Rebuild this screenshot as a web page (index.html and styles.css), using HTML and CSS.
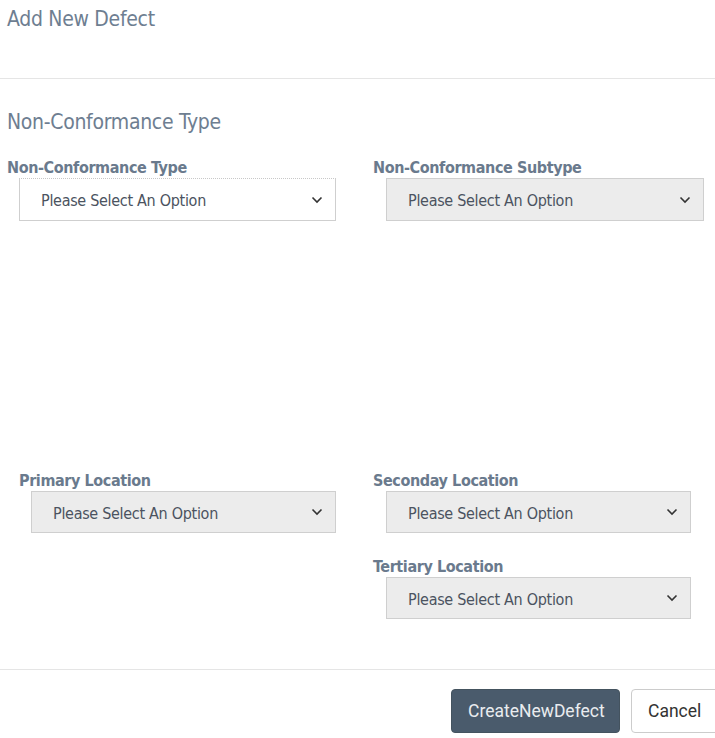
FILE: index.html
```html
<!DOCTYPE html>
<html>
<head>
<meta charset="utf-8">
<link rel="stylesheet" href="styles.css">
</head>
<body>
<div class="modal">
  <div class="modal-header">
    <h1 class="modal-title">Add New Defect</h1>
  </div>
  <div class="modal-body">
    <h2 class="section-title">Non-Conformance Type</h2>
    <div class="row row-top">
      <div class="field field-left">
        <label class="field-label">Non-Conformance Type</label>
        <div class="select select-white select-focus">
          <span class="select-text">Please Select An Option</span>
          <svg class="chev" width="12" height="8" viewBox="0 0 12 8"><path d="M1.5 1.5 L6 6 L10.5 1.5" fill="none" stroke="#333" stroke-width="1.6"/></svg>
        </div>
      </div>
      <div class="field field-right">
        <label class="field-label">Non-Conformance Subtype</label>
        <div class="select select-wide">
          <span class="select-text">Please Select An Option</span>
          <svg class="chev" width="12" height="8" viewBox="0 0 12 8"><path d="M1.5 1.5 L6 6 L10.5 1.5" fill="none" stroke="#333" stroke-width="1.6"/></svg>
        </div>
      </div>
    </div>
    <div class="row row-loc">
      <div class="field field-left indent">
        <label class="field-label">Primary Location</label>
        <div class="select">
          <span class="select-text">Please Select An Option</span>
          <svg class="chev" width="12" height="8" viewBox="0 0 12 8"><path d="M1.5 1.5 L6 6 L10.5 1.5" fill="none" stroke="#333" stroke-width="1.6"/></svg>
        </div>
      </div>
      <div class="field field-right">
        <label class="field-label">Seconday Location</label>
        <div class="select">
          <span class="select-text">Please Select An Option</span>
          <svg class="chev" width="12" height="8" viewBox="0 0 12 8"><path d="M1.5 1.5 L6 6 L10.5 1.5" fill="none" stroke="#333" stroke-width="1.6"/></svg>
        </div>
        <label class="field-label second">Tertiary Location</label>
        <div class="select">
          <span class="select-text">Please Select An Option</span>
          <svg class="chev" width="12" height="8" viewBox="0 0 12 8"><path d="M1.5 1.5 L6 6 L10.5 1.5" fill="none" stroke="#333" stroke-width="1.6"/></svg>
        </div>
      </div>
    </div>
  </div>
  <div class="modal-footer">
    <button class="btn btn-primary">CreateNewDefect</button>
    <button class="btn btn-default">Cancel</button>
  </div>
</div>
</body>
</html>
```
FILE: styles.css
```css
* { box-sizing: border-box; }
html, body { margin: 0; padding: 0; background: #fff; overflow: hidden; }
body { width: 715px; height: 738px; font-family: "DejaVu Sans Condensed", "DejaVu Sans", sans-serif; }

.modal-header {
  height: 79px;
  padding: 6px 7px 0;
  border-bottom: 1px solid #e5e5e5;
}
.modal-title {
  margin: 0;
  font-weight: normal;
  font-size: 21px;
  line-height: 26px;
  color: #6e7e91;
  letter-spacing: -0.3px;
}

.modal-body { padding: 30px 0 0 7px; height: 590px; }
.section-title {
  margin: 0;
  font-weight: normal;
  font-size: 21px;
  line-height: 26px;
  color: #6e7e91;
  letter-spacing: -0.3px;
}

.row { display: flex; }
.row-top { margin-top: 24px; }
.row-loc { margin-top: 251px; }

.field { display: flex; flex-direction: column; }
.field-left { width: 366px; }
.field-right { width: 342px; }
.indent { padding-left: 12px; }

.field-label {
  font-weight: bold;
  font-size: 16px;
  line-height: 18px;
  color: #6a7a8d;
  letter-spacing: -0.4px;
  margin-bottom: 1px;
}
.field-label.second { margin-top: 25px; }

.select {
  margin-left: 12px;
  width: 305px;
  height: 42px;
  background: #ececec;
  border: 1px solid #cfcfcf;
  display: flex;
  align-items: center;
  justify-content: space-between;
  padding: 2px 12px 0 21px;
}
.field-right .select { margin-left: 13px; }
.select-white { background: #fff; width: 317px; height: 43px; }
.select-focus { border-top: 1px dotted #c8c8c8; }
.select-wide { width: 318px; height: 43px; }
.select-text {
  font-size: 16px;
  color: #4b5360;
  letter-spacing: -0.3px;
}
.chev { display: block; margin-top: -2px; }

.modal-footer {
  border-top: 1px solid #e5e5e5;
  height: 70px;
  display: flex;
  justify-content: flex-end;
  align-items: flex-start;
  padding-top: 19px;
  gap: 11px;
  margin-right: -31px;
}
.btn {
  font-family: Roboto, "Liberation Sans", sans-serif;
  font-size: 17.5px;
  height: 44px;
  border-radius: 4px;
  padding: 0 16px;
  cursor: pointer;
}
.btn-primary {
  background: #4a5b6c;
  border: 1px solid #44535f;
  color: #e9ecef;
  width: 169px;
}
.btn-default {
  background: #fff;
  border: 1px solid #ccc;
  color: #333;
  width: 115px;
  text-align: left;
  padding-left: 16px;
}
```
